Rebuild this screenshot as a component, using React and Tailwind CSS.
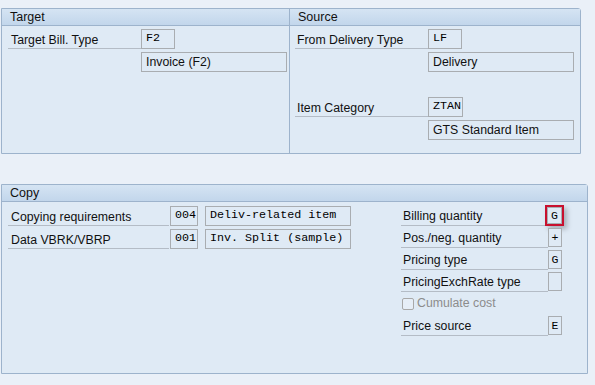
const Field = ({ value, mono, className = "" }) => (
	<div
		className={`h-[20px] border border-[#a9adb1] bg-[#dfeaf5] flex items-center px-[4px] leading-none whitespace-pre ${
			mono ? "font-['Liberation_Mono',monospace] text-[11.7px] text-black" : ""
		} ${className}`}
	>
		{value}
	</div>
);

const Label = ({ text, className = "" }) => (
	<div
		className={`h-[20px] border-b border-[#b4bcc6] flex items-end pb-[2px] leading-none pl-[2px] ${className}`}
	>
		{text}
	</div>
);

const Header = ({ title }) => (
	<div className="h-[17px] border-b border-[#9db3cc] bg-gradient-to-b from-[#d5e4f3] to-[#c2d6eb] pl-[8px] flex items-center text-[12.5px]">
		{title}
	</div>
);

const CopyRow = ({ label, value, highlight }) => (
	<div className="flex items-center h-[19px] mb-[3px]">
		<Label text={label} className="w-[147px] h-[19px]" />
		{highlight ? (
			<div className="-ml-[3px] -my-[1px] border-2 border-[#c8102e] shadow-[3px_3px_5px_rgba(0,0,0,0.25)]">
				<div className="w-[15px] h-[17px] border border-[#a9adb1] bg-[#dfeaf5] flex items-center justify-center text-[11.5px] font-['Liberation_Mono',monospace] text-black">
					{value}
				</div>
			</div>
		) : (
			<div className="w-[14px] h-[19px] border border-[#a9adb1] bg-[#dfeaf5] flex items-center justify-center text-[11.5px] font-['Liberation_Mono',monospace] text-black">
				{value}
			</div>
		)}
	</div>
);

export default function App() {
	return (
		<div className="w-[595px] h-[385px] bg-[#eaf0f8] pt-[8px] pl-[1px] font-['Liberation_Sans',Arial,sans-serif] text-[12.3px] text-[#111]">
			{/* Target / Source */}
			<div className="w-[580px] h-[146px] border border-[#9db3cc] rounded-tr-[3px] bg-[#dfeaf5] flex">
				<div className="w-[288px] border-r border-[#9db3cc] flex flex-col">
					<Header title="Target" />
					<div className="pl-[6px] pt-[3px]">
						<div className="flex">
							<Label text="Target Bill. Type" className="w-[133px] pl-[3px]" />
							<Field value="F2" mono className="w-[34px]" />
						</div>
						<div className="flex mt-[3px] pl-[133px]">
							<Field value="Invoice (F2)" className="w-[146px]" />
						</div>
					</div>
				</div>
				<div className="flex-1 flex flex-col">
					<Header title="Source" />
					<div className="pl-[5px] pt-[3px]">
						<div className="flex">
							<Label text="From Delivery Type" className="w-[133px]" />
							<Field value="LF" mono className="w-[34px]" />
						</div>
						<div className="flex mt-[3px] pl-[133px]">
							<Field value="Delivery" className="w-[146px]" />
						</div>
						<div className="flex mt-[25px]">
							<Label text="Item Category" className="w-[133px]" />
							<Field value="ZTAN" mono className="w-[35px]" />
						</div>
						<div className="flex mt-[3px] pl-[133px]">
							<Field value="GTS Standard Item" className="w-[146px]" />
						</div>
					</div>
				</div>
			</div>

			{/* Copy */}
			<div className="mt-[30px] w-[587px] h-[190px] border border-[#9db3cc] rounded-tr-[3px] bg-[#dfeaf5] flex flex-col">
				<Header title="Copy" />
				<div className="flex pt-[4px]">
					<div className="pl-[6px] w-[399px]">
						<div className="flex items-center">
							<Label text="Copying requirements" className="w-[161px] h-[19px] pl-[3px]" />
							<Field value="004" mono className="w-[28px] h-[19px] ml-[1px]" />
							<Field value="Deliv-related item" mono className="w-[146px] h-[19px] ml-[7px]" />
						</div>
						<div className="flex items-center mt-[3px]">
							<Label text="Data VBRK/VBRP" className="w-[161px] h-[19px] pl-[3px]" />
							<Field value="001" mono className="w-[28px] h-[19px] ml-[1px]" />
							<Field value="Inv. Split (sample)" mono className="w-[146px] h-[19px] ml-[7px]" />
						</div>
					</div>
					<div className="flex flex-col">
						<CopyRow label="Billing quantity" value="G" highlight />
						<CopyRow label="Pos./neg. quantity" value="+" />
						<CopyRow label="Pricing type" value="G" />
						<CopyRow label="PricingExchRate type" value="" />
						<div className="flex items-center h-[19px] mb-[3px] text-[#8c8c8c]">
							<span className="w-[12px] h-[12px] border border-[#a8a8a8] rounded-[2px] bg-[#e6eef7] mr-[3px] ml-[1px]" />
							Cumulate cost
						</div>
						<CopyRow label="Price source" value="E" />
					</div>
				</div>
			</div>
		</div>
	);
}
